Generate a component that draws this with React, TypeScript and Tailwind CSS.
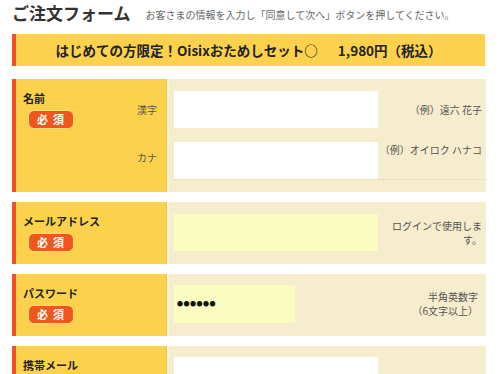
import React from "react";

const font = { fontFamily: '"Noto Sans CJK JP", "Noto Sans", sans-serif' };

function Badge() {
  return (
    <div className="mt-[4px] ml-[5px] flex h-[19px] w-[46px] items-center justify-center rounded-[6px] border-[1.5px] border-[#fde07a] bg-[#f2561d] text-[11px] font-bold leading-none text-white tracking-[5px] pl-[4px]">
      必須
    </div>
  );
}

function LabelCell({ label, children }: { label: string; children?: React.ReactNode }) {
  return (
    <div className="flex w-[151px] shrink-0 border-r border-[#f5c53c] bg-[#fcd24c]">
      <div className="flex-1 pl-[7px] pt-[11px]">
        <div className="text-[11px] font-bold leading-[16px] text-[#222]">{label}</div>
        <Badge />
      </div>
      {children}
    </div>
  );
}

function Section({ children }: { children: React.ReactNode }) {
  return (
    <div className="mt-[10px] ml-[12px] flex w-[474px] border-l-4 border-[#f4511e]">
      {children}
    </div>
  );
}

function Hint({ children, pr = "pr-[4px]" }: { children: React.ReactNode; pr?: string }) {
  return (
    <div className={`flex flex-1 items-center justify-end text-right text-[10px] leading-[14px] text-[#555] ${pr}`}>
      {children}
    </div>
  );
}

export default function App() {
  return (
    <div className="h-[374px] w-[500px] overflow-hidden bg-white" style={font}>
      <div className="flex items-end pl-[12px] pt-[1px]">
        <h1 className="text-[17px] font-bold leading-[24px] text-[#333]">ご注文フォーム</h1>
        <p className="mb-[3px] ml-[15px] text-[10px] leading-[14px] text-[#666]">
          お客さまの情報を入力し「同意して次へ」ボタンを押してください。
        </p>
      </div>

      <div className="mt-[9px] ml-[12px] flex h-[32px] w-[473px] items-center justify-center border-l-4 border-[#f4511e] bg-[#fcd24c] pr-[4px] text-[13.5px] font-bold text-[#222]">
        はじめての方限定！Oisixおためしセット○<span className="ml-[20px]">1,980円（税込）</span>
      </div>

      <div className="mt-[13px] ml-[12px] flex w-[474px] border-l-4 border-[#f4511e]">
        <LabelCell label="名前">
          <div className="flex flex-col items-end pr-[9px] pt-[12px] text-[10px] text-[#555]">
            <div className="flex h-[37px] items-center">漢字</div>
            <div className="mt-[14px] flex h-[30px] items-center">カナ</div>
          </div>
        </LabelCell>
        <div className="flex-1 border-l-2 border-[#fbf5e4] bg-[#f6ecce] pl-[5px] pt-[12px] pb-[12px]">
          <div className="flex">
            <div className="h-[37px] w-[204px] bg-white" />
            <Hint>（例）遠六 花子</Hint>
          </div>
          <div className="mt-[14px] flex border-b border-dotted border-[#e2d6b0]">
            <div className="h-[37px] w-[204px] bg-white" />
            <div className="flex flex-1 items-start justify-end pt-[1px] pr-[4px] text-[10px] leading-[14px] text-[#555]">
              （例）オイロク ハナコ
            </div>
          </div>
        </div>
      </div>

      <Section>
        <LabelCell label="メールアドレス" />
        <div className="flex flex-1 border-l-2 border-[#fbf5e4] bg-[#f6ecce] pl-[5px] pt-[12px] pb-[13px]">
          <div className="h-[37px] w-[204px] bg-[#fafdbf]" />
          <Hint>
            ログインで使用しま
            <br />
            す。
          </Hint>
        </div>
      </Section>

      <Section>
        <LabelCell label="パスワード" />
        <div className="flex flex-1 border-l-2 border-[#fbf5e4] bg-[#f6ecce] pl-[5px] pt-[11px] pb-[13px]">
          <div className="flex h-[38px] w-[121px] items-center bg-[#fafdbf] pl-[3px] text-[6px] leading-none tracking-[0.5px] text-[#111]">
            ●●●●●●
          </div>
          <Hint pr="pr-[8px]">
            半角英数字
            <br />
            （6文字以上）
          </Hint>
        </div>
      </Section>

      <Section>
        <LabelCell label="携帯メール" />
        <div className="flex flex-1 border-l-2 border-[#fbf5e4] bg-[#f6ecce] pl-[5px] pt-[11px] pb-[13px]">
          <div className="h-[37px] w-[204px] bg-white" />
          <div className="flex flex-1 justify-end pt-[14px] pr-[10px] text-[10px] text-[#555]">（例）</div>
        </div>
      </Section>
    </div>
  );
}
